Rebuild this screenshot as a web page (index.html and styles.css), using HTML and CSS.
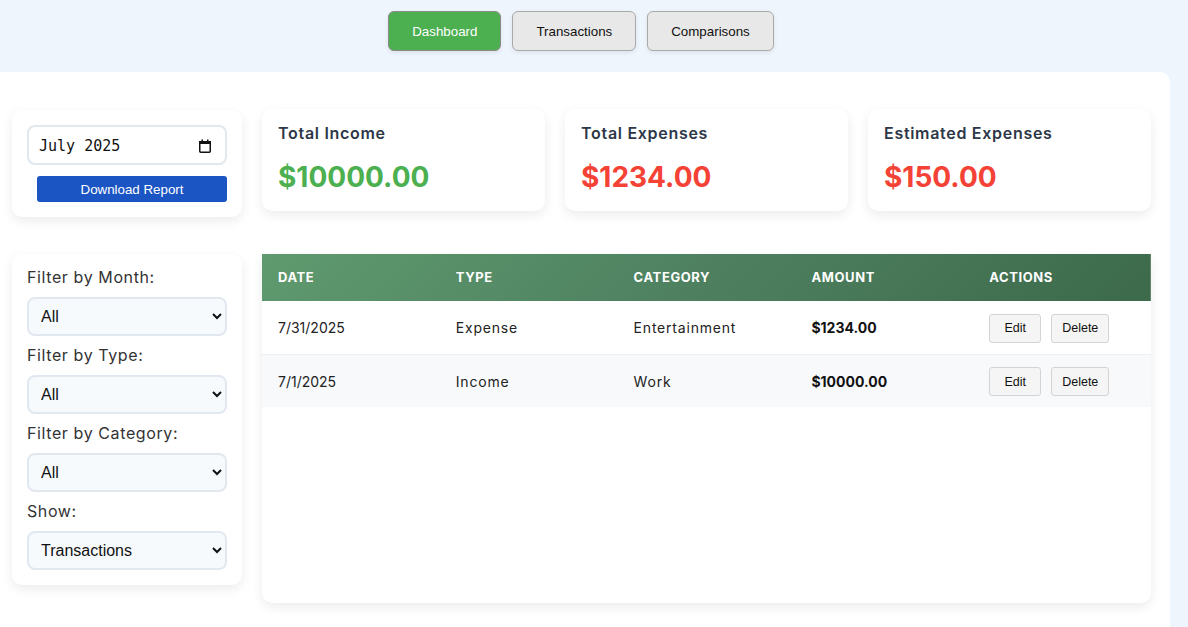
FILE: index.html
```html
<!DOCTYPE html>
<html lang="en">
<head>
<meta charset="utf-8">
<title>Dashboard</title>
<link rel="stylesheet" href="styles.css">
</head>
<body>
<nav class="nav">
  <button class="nav-btn active">Dashboard</button>
  <button class="nav-btn">Transactions</button>
  <button class="nav-btn">Comparisons</button>
</nav>
<main class="panel">
  <aside class="sidebar">
    <div class="card date-card">
      <div class="month-input">
        <span class="month-text">July 2025</span>
        <svg class="cal-icon" width="14" height="14" viewBox="0 0 14 14" aria-hidden="true">
          <rect x="1.75" y="2.75" width="10.5" height="10.5" rx="1" fill="none" stroke="#111" stroke-width="1.5"/>
          <rect x="1" y="2" width="12" height="3" fill="#111"/>
          <rect x="3.5" y="0.5" width="1.5" height="2" fill="#111"/>
          <rect x="9" y="0.5" width="1.5" height="2" fill="#111"/>
        </svg>
      </div>
      <button class="download-btn">Download Report</button>
    </div>
    <div class="card filter-card">
      <label class="filter-label">Filter by Month:</label>
      <select class="filter-select"><option>All</option></select>
      <label class="filter-label">Filter by Type:</label>
      <select class="filter-select"><option>All</option></select>
      <label class="filter-label">Filter by Category:</label>
      <select class="filter-select"><option>All</option></select>
      <label class="filter-label">Show:</label>
      <select class="filter-select last"><option>Transactions</option></select>
    </div>
  </aside>
  <section class="content">
    <div class="stats">
      <div class="card stat-card">
        <div class="stat-title">Total Income</div>
        <div class="stat-value green">$10000.00</div>
      </div>
      <div class="card stat-card">
        <div class="stat-title">Total Expenses</div>
        <div class="stat-value red">$1234.00</div>
      </div>
      <div class="card stat-card">
        <div class="stat-title">Estimated Expenses</div>
        <div class="stat-value red">$150.00</div>
      </div>
    </div>
    <div class="card table-card">
      <table class="tx-table">
        <thead>
          <tr><th>Date</th><th>Type</th><th>Category</th><th>Amount</th><th>Actions</th></tr>
        </thead>
        <tbody>
          <tr>
            <td>7/31/2025</td><td class="txt">Expense</td><td class="txt">Entertainment</td><td class="amount">$1234.00</td>
            <td><button class="act-btn">Edit</button><button class="act-btn">Delete</button></td>
          </tr>
          <tr class="alt">
            <td>7/1/2025</td><td class="txt">Income</td><td class="txt">Work</td><td class="amount">$10000.00</td>
            <td><button class="act-btn">Edit</button><button class="act-btn">Delete</button></td>
          </tr>
        </tbody>
      </table>
    </div>
  </section>
</main>
</body>
</html>
```
FILE: styles.css
```css
* { box-sizing: border-box; }
html, body { margin: 0; padding: 0; }
body {
  background: #eef5fd;
  font-family: Inter, "Noto Sans", sans-serif;
  color: #222;
  overflow: hidden;
}
.nav {
  display: flex;
  justify-content: center;
  gap: 11px;
  padding: 11px 26px 0 0;
  height: 72px;
}
.nav-btn {
  height: 40px;
  padding: 0 23px;
  font-family: "Liberation Sans", Arial, sans-serif;
  font-size: 13.333px;
  color: #111;
  background: #e8e8e8;
  border: 1px solid #a9a9a9;
  border-radius: 6px;
  box-shadow: 0 2px 4px rgba(0,0,0,0.08);
}
.nav-btn.active {
  background: #4caf50;
  color: #fff;
  border-color: #8a8a8a;
}
.panel {
  width: 1170px;
  background: #fff;
  border-top-right-radius: 10px;
  display: flex;
  gap: 20px;
  padding: 37px 19px 40px 12px;
  min-height: 580px;
}
.card {
  background: #fff;
  border-radius: 10px;
  box-shadow: 0 4px 12px rgba(0,0,0,0.08);
}
.sidebar {
  width: 230px;
  display: flex;
  flex-direction: column;
  gap: 37px;
  flex-shrink: 0;
}
.date-card {
  padding: 15px;
  display: flex;
  flex-direction: column;
  margin-top: 1px;
}
.month-input {
  height: 40px;
  border: 2px solid #e2e8f0;
  border-radius: 8px;
  padding: 2px 13px 0 10px;
  display: flex;
  align-items: center;
  justify-content: space-between;
  background: #fff;
}
.month-text {
  font-family: "DejaVu Sans Mono", "Liberation Mono", monospace;
  font-size: 15px;
  color: #111;
}
.cal-icon { display: block; }
.download-btn {
  margin: 11px 0 0 10px;
  height: 26px;
  background: #1b54c3;
  color: #fff;
  border: none;
  border-radius: 3px;
  font-family: "Liberation Sans", Arial, sans-serif;
  font-size: 13.333px;
}
.filter-card {
  padding: 13px 15px 15px;
  display: flex;
  flex-direction: column;
}
.filter-label {
  font-size: 16px;
  line-height: 21px;
  color: #333;
  letter-spacing: 0.6px;
  margin-bottom: 9px;
}
.filter-select {
  height: 39px;
  margin-bottom: 9px;
  border: 2px solid #e2e8f0;
  border-radius: 8px;
  background: #f7fafc;
  padding: 0 8px;
  font-family: "Liberation Sans", Arial, sans-serif;
  font-size: 16px;
  color: #111;
}
.filter-select.last { margin-bottom: 0; }
.content {
  flex: 1;
  display: flex;
  flex-direction: column;
  gap: 43px;
}
.stats {
  display: flex;
  gap: 20px;
}
.stat-card {
  flex: 1;
  padding: 14px 16px;
  height: 102px;
}
.stat-title {
  font-size: 16px;
  line-height: 20px;
  font-weight: 600;
  letter-spacing: 0.7px;
  color: #2d3748;
}
.stat-value {
  margin-top: 16px;
  font-size: 28px;
  line-height: 36px;
  font-weight: 700;
}
.green { color: #4caf50; }
.red { color: #f44336; }
.table-card {
  min-height: 349px;
  overflow: hidden;
  border-radius: 0 0 10px 10px;
}
.tx-table {
  width: 100%;
  border-collapse: collapse;
  table-layout: fixed;
}
.tx-table th {
  text-align: left;
  padding: 16px;
  line-height: 15px;
  font-size: 13px;
  font-weight: 700;
  letter-spacing: 0.6px;
  text-transform: uppercase;
  color: #fff;
}
.tx-table thead tr {
  background: linear-gradient(135deg, #5f9a6e 0%, #4e8060 50%, #3c6a4a 100%);
}
.tx-table td {
  padding: 11px 16px;
  font-size: 14px;
  line-height: 29px;
  color: #222;
  border-bottom: 1px solid #edf0f3;
}
.tx-table td.txt { letter-spacing: 0.8px; }
.tx-table tr.alt td { background: #f7f9fb; border-bottom: none; }
.tx-table td.amount { font-weight: 700; color: #111; }
.act-btn {
  height: 29px;
  min-width: 52px;
  padding: 0 10px;
  margin-right: 10px;
  background: #f5f5f5;
  border: 1px solid #d4d4d4;
  border-radius: 3px;
  font-family: "Liberation Sans", Arial, sans-serif;
  font-size: 12.5px;
  color: #111;
  vertical-align: middle;
}
```
